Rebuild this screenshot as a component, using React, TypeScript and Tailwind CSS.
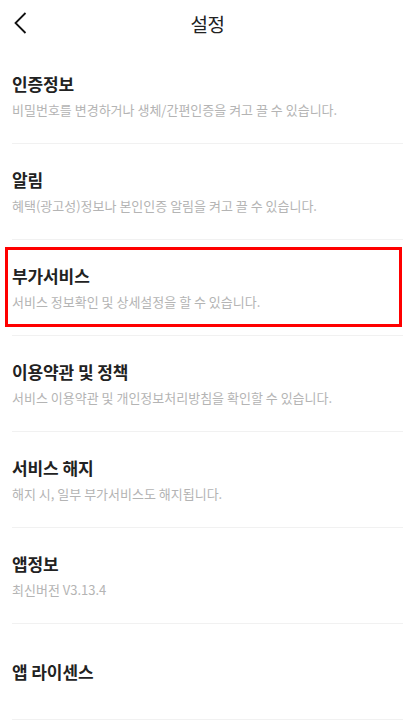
import React from 'react';

const items = [
  { title: '인증정보', desc: '비밀번호를 변경하거나 생체/간편인증을 켜고 끌 수 있습니다.' },
  { title: '알림', desc: '혜택(광고성)정보나 본인인증 알림을 켜고 끌 수 있습니다.' },
  { title: '부가서비스', desc: '서비스 정보확인 및 상세설정을 할 수 있습니다.', highlight: true },
  { title: '이용약관 및 정책', desc: '서비스 이용약관 및 개인정보처리방침을 확인할 수 있습니다.' },
  { title: '서비스 해지', desc: '해지 시, 일부 부가서비스도 해지됩니다.' },
  { title: '앱정보', desc: '최신버전 V3.13.4' },
  { title: '앱 라이센스' },
];

export default function App() {
  return (
    <div
      className="w-[415px] h-[728px] bg-white overflow-hidden text-[#222]"
      style={{ fontFamily: '"Noto Sans CJK KR", "Noto Sans", sans-serif' }}
    >
      {/* header */}
      <div className="relative h-[48px] flex items-center justify-center">
        <button className="absolute left-0 top-0 w-[48px] h-[48px]">
          <svg width="48" height="48" viewBox="0 0 48 48" fill="none">
            <polyline points="25.5,13 15.5,23 25.5,33" stroke="#111" strokeWidth="1.8" />
          </svg>
        </button>
        <h1 className="text-[19px] leading-[24px] font-normal tracking-[-0.5px]">설정</h1>
      </div>

      {/* list */}
      <ul className="mx-3">
        {items.map((item) => (
          <li
            key={item.title}
            className="relative h-[96px] border-b border-[#f1f1f1] flex flex-col justify-center"
          >
            <div className="text-[17px] leading-[24px] font-bold tracking-[-0.1px]">{item.title}</div>
            {item.desc && (
              <div className="mt-[5px] text-[13px] leading-[18px] text-[#b4b4b4]">
                {item.desc}
              </div>
            )}
            {item.highlight && (
              <div className="absolute left-[-7px] right-[1px] top-[7px] bottom-[8px] border-[3px] border-[#ff0000]" />
            )}
          </li>
        ))}
      </ul>
    </div>
  );
}
